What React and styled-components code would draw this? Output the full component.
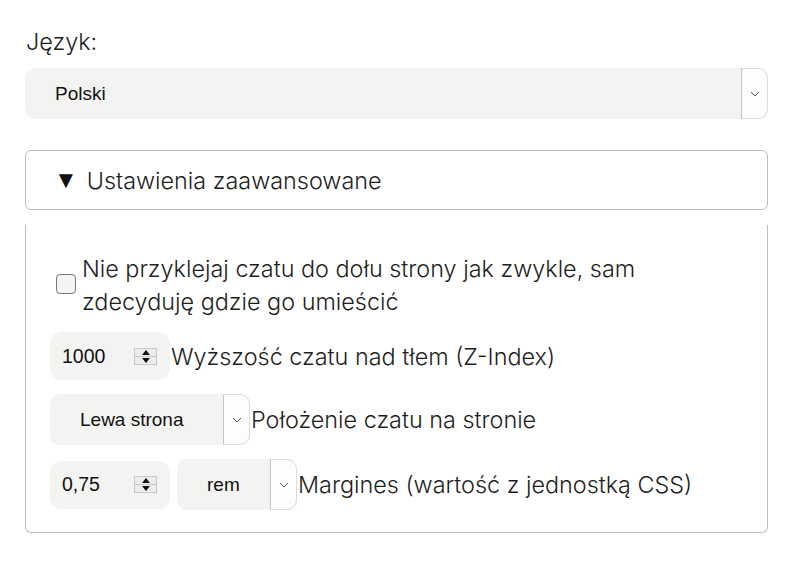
import styled, { createGlobalStyle } from "styled-components";

const GlobalStyle = createGlobalStyle`
  body {
    margin: 0;
    background: #ffffff;
    font-family: "Inter", "DejaVu Sans", sans-serif;
    font-weight: 300;
    color: #1f1f1f;
  }
`;

export const Page = styled.div`
  width: 743px;
  padding: 27px 27px 0 25px;
`;

export const FieldLabel = styled.div`
  font-size: 23.4px;
  line-height: 30px;
  padding-left: 1px;
`;

export const SelectBox = styled.div`
  display: flex;
  align-items: stretch;
  width: ${(p) => p.width || "100%"};
  height: 51px;
  background: #f3f3f1;
  border-radius: 10px;
  font-family: "Liberation Sans", Arial, sans-serif;
  font-weight: 400;
  font-size: 19px;
  color: #111111;
  flex-shrink: 0;
`;

export const SelectValue = styled.div`
  flex: 1;
  display: flex;
  align-items: center;
  padding-left: 30px;
`;

export const Indicator = styled.div`
  width: 25px;
  display: flex;
  align-items: center;
  justify-content: center;
  background: #fdfdfd;
  border: 1px solid #dcdcdc;
  border-left-color: #c4c4c4;
  border-radius: 0 10px 10px 0;
`;

export const LangSelect = styled(SelectBox)`
  margin-top: 11px;
`;

export const Details = styled.div`
  margin-top: 31px;
`;

export const Summary = styled.div`
  height: 58px;
  display: flex;
  align-items: center;
  gap: 9px;
  padding-left: 28px;
  border: 1px solid #bdbdbd;
  border-radius: 6px;
  font-size: 23.4px;
`;

export const Triangle = styled.span`
  font-family: "DejaVu Sans", sans-serif;
  font-size: 24px;
  line-height: 1;
  color: #111111;
`;

export const Panel = styled.div`
  margin-top: 15px;
  border: 1px solid #bdbdbd;
  border-top: none;
  border-radius: 0 0 6px 6px;
  padding: 27px 20px 22px 24px;
  display: flex;
  flex-direction: column;
  gap: 14px;
`;

export const CheckRow = styled.label`
  display: flex;
  align-items: center;
  gap: 6px;
  padding-left: 6px;
  font-size: 23.4px;
  line-height: 33px;
`;

export const CheckBox = styled.span`
  width: 18px;
  height: 18px;
  flex-shrink: 0;
  border: 1px solid #767676;
  border-radius: 4px;
  background: #f4f4f4;
  margin-bottom: 2px;
`;

export const Row = styled.div`
  display: flex;
  align-items: center;
  gap: 1px;
  font-size: 23.4px;
`;

export const Controls = styled.div`
  display: flex;
  align-items: center;
  gap: 7px;
`;

export const NumberBox = styled.div`
  width: 120px;
  height: 48px;
  display: flex;
  align-items: center;
  justify-content: space-between;
  padding: 0 13px 0 12px;
  box-sizing: border-box;
  background: #f3f3f1;
  border-radius: 12px;
  font-family: "Liberation Sans", Arial, sans-serif;
  font-weight: 400;
  font-size: 19.5px;
  color: #111111;
  flex-shrink: 0;
`;

export const Spinner = styled.div`
  width: 21px;
  height: 15px;
  display: flex;
  flex-direction: column;
  border: 1px solid #c8c8c8;
  background: #ececec;
`;

export const SpinHalf = styled.div`
  flex: 1;
  display: flex;
  align-items: center;
  justify-content: center;
  & + & {
    border-top: 1px solid #c8c8c8;
  }
`;

const Chevron = () => (
  <svg width="10" height="6" viewBox="0 0 10 6">
    <path d="M1 1 L5 5 L9 1" fill="none" stroke="#555" strokeWidth="1" />
  </svg>
);

const Arrow = ({ up }) => (
  <svg width="10" height="5" viewBox="0 0 10 5">
    <path d={up ? "M1 5 L5 0 L9 5 Z" : "M1 0 L5 5 L9 0 Z"} fill="#111" />
  </svg>
);

const Select = ({ value, width }) => (
  <SelectBox width={width}>
    <SelectValue>{value}</SelectValue>
    <Indicator>
      <Chevron />
    </Indicator>
  </SelectBox>
);

const NumberInput = ({ value }) => (
  <NumberBox>
    <span>{value}</span>
    <Spinner>
      <SpinHalf>
        <Arrow up />
      </SpinHalf>
      <SpinHalf>
        <Arrow />
      </SpinHalf>
    </Spinner>
  </NumberBox>
);

export default function App() {
  return (
    <>
      <GlobalStyle />
      <Page>
        <FieldLabel>Język:</FieldLabel>
        <LangSelect>
          <SelectValue>Polski</SelectValue>
          <Indicator>
            <Chevron />
          </Indicator>
        </LangSelect>
        <Details>
          <Summary>
            <Triangle>▼</Triangle>
            <span>Ustawienia zaawansowane</span>
          </Summary>
          <Panel>
            <CheckRow>
              <CheckBox />
              <span>
                Nie przyklejaj czatu do dołu strony jak zwykle, sam
                <br />
                zdecyduję gdzie go umieścić
              </span>
            </CheckRow>
            <Row>
              <NumberInput value="1000" />
              <span>Wyższość czatu nad tłem (Z-Index)</span>
            </Row>
            <Row>
              <Select value="Lewa strona" width="200px" />
              <span>Położenie czatu na stronie</span>
            </Row>
            <Row>
              <Controls>
                <NumberInput value="0,75" />
                <Select value="rem" width="120px" />
              </Controls>
              <span>Margines (wartość z jednostką CSS)</span>
            </Row>
          </Panel>
        </Details>
      </Page>
    </>
  );
}
